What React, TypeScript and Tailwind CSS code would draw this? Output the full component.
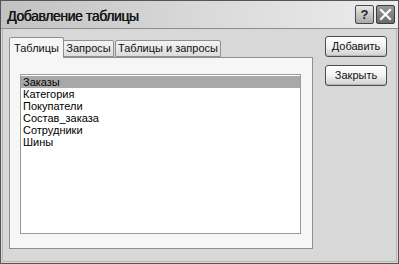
import React from "react";

const tables = ["Заказы", "Категория", "Покупатели", "Состав_заказа", "Сотрудники", "Шины"];

function DialogButton({ label }: { label: string }) {
  return (
    <button className="w-[62px] h-[21px] rounded-[3px] border border-[#4d4d4d] bg-gradient-to-b from-[#ffffff] via-[#f2f2f2] to-[#cfcfcf] text-[11px] text-[#111] leading-none shadow-[inset_0_-1px_0_#b5b5b5]">
      {label}
    </button>
  );
}

export default function App() {
  return (
    <div
      className="w-[399px] h-[264px] border border-[#555] bg-[#d8d8d8] flex flex-col overflow-hidden"
      style={{ fontFamily: '"Liberation Sans", Arial, sans-serif' }}
    >
      {/* title bar */}
      <div className="h-[28px] flex items-center justify-between pl-[6px] pr-[3px] border-b border-[#8c8c8c] bg-gradient-to-r from-[#c2c2c2] via-[#d9d9d9] to-[#ececec]">
        <span className="text-[14px] text-[#161616] tracking-[-0.4px] pt-[3px] [text-shadow:0.4px_0_0_#161616]">
          Добавление таблицы
        </span>
        <div className="flex gap-[2px]">
          <div className="w-[19px] h-[19px] rounded-[2px] border border-[#4a4a4a] bg-gradient-to-b from-[#e8e8e8] to-[#a9a9a9] flex items-center justify-center text-[13px] font-bold text-[#222] leading-none">
            ?
          </div>
          <div className="w-[19px] h-[19px] rounded-[2px] border border-[#3e3e3e] bg-gradient-to-b from-[#9a9a9a] to-[#6a6a6a] flex items-center justify-center">
            <svg width="13" height="13" viewBox="0 0 13 13">
              <path d="M2 2 L11 11 M11 2 L2 11" stroke="#fff" strokeWidth="2.2" strokeLinecap="square" />
            </svg>
          </div>
        </div>
      </div>

      {/* body */}
      <div className="flex-1 flex pl-[6px] pt-[7px] pb-[12px] border-x border-b border-[#b8b8b8] mx-[1px] mb-[1px]">
        <div className="w-[304px] flex flex-col">
          <div className="flex items-end h-[21px] relative z-10">
            <div className="h-[21px] w-[55px] border border-b-0 border-[#8f8f8f] bg-[#f6f6f6] rounded-t-[2px] flex items-center justify-center text-[11px] text-[#111] -mb-[1px]">
              Таблицы
            </div>
            <div className="h-[17px] w-[50px] border border-[#8f8f8f] border-l-0 bg-gradient-to-b from-[#f4f4f4] to-[#dcdcdc] rounded-tr-[2px] flex items-center justify-center text-[11px] text-[#111]">
              Запросы
            </div>
            <div className="h-[17px] w-[106px] ml-[1px] border border-[#8f8f8f] bg-gradient-to-b from-[#f4f4f4] to-[#dcdcdc] rounded-t-[2px] flex items-center justify-center text-[11px] text-[#111]">
              Таблицы и запросы
            </div>
          </div>
          <div className="flex-1 border border-[#8f8f8f] bg-[#f6f6f6] pl-[10px] pr-[11px] pt-[16px] pb-[14px] flex">
            <div className="flex-1 border border-[#9a9a9a] bg-white pt-[1px]">
              {tables.map((t, i) => (
                <div
                  key={t}
                  className={`h-[12px] flex items-center pl-[2px] text-[11px] text-black ${i === 0 ? "bg-[#a8a8a8]" : ""}`}
                >
                  {t}
                </div>
              ))}
            </div>
          </div>
        </div>
        <div className="flex flex-col gap-[8px] ml-[12px] pt-[0px]">
          <DialogButton label="Добавить" />
          <DialogButton label="Закрыть" />
        </div>
      </div>
    </div>
  );
}
